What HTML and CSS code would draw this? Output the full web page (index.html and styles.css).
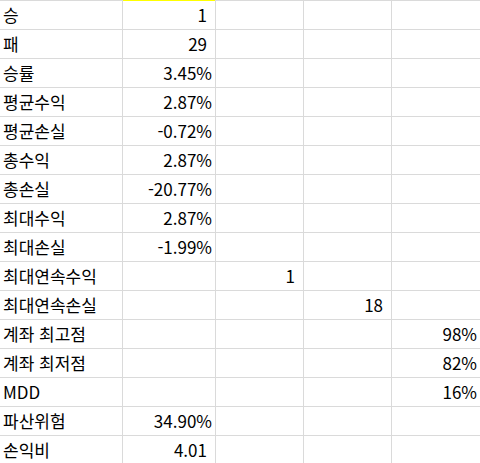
FILE: index.html
```html
<!DOCTYPE html>
<html lang="ko">
<head>
<meta charset="utf-8">
<link rel="stylesheet" href="styles.css">
</head>
<body>
<div class="sheet">
  <div class="c lbl">승</div><div class="c num n-int sel">1</div><div class="c"></div><div class="c"></div><div class="c"></div>
  <div class="c lbl">패</div><div class="c num n-int">29</div><div class="c"></div><div class="c"></div><div class="c"></div>
  <div class="c lbl">승률</div><div class="c num">3.45%</div><div class="c"></div><div class="c"></div><div class="c"></div>
  <div class="c lbl">평균수익</div><div class="c num">2.87%</div><div class="c"></div><div class="c"></div><div class="c"></div>
  <div class="c lbl">평균손실</div><div class="c num">-0.72%</div><div class="c"></div><div class="c"></div><div class="c"></div>
  <div class="c lbl">총수익</div><div class="c num">2.87%</div><div class="c"></div><div class="c"></div><div class="c"></div>
  <div class="c lbl">총손실</div><div class="c num">-20.77%</div><div class="c"></div><div class="c"></div><div class="c"></div>
  <div class="c lbl">최대수익</div><div class="c num">2.87%</div><div class="c"></div><div class="c"></div><div class="c"></div>
  <div class="c lbl">최대손실</div><div class="c num">-1.99%</div><div class="c"></div><div class="c"></div><div class="c"></div>
  <div class="c lbl">최대연속수익</div><div class="c"></div><div class="c num n-int">1</div><div class="c"></div><div class="c"></div>
  <div class="c lbl">최대연속손실</div><div class="c"></div><div class="c"></div><div class="c num n-int">18</div><div class="c"></div>
  <div class="c lbl">계좌 최고점</div><div class="c"></div><div class="c"></div><div class="c"></div><div class="c num">98%</div>
  <div class="c lbl">계좌 최저점</div><div class="c"></div><div class="c"></div><div class="c"></div><div class="c num">82%</div>
  <div class="c lbl">MDD</div><div class="c"></div><div class="c"></div><div class="c"></div><div class="c num">16%</div>
  <div class="c lbl">파산위험</div><div class="c num">34.90%</div><div class="c"></div><div class="c"></div><div class="c"></div>
  <div class="c lbl">손익비</div><div class="c num n-int">4.01</div><div class="c"></div><div class="c"></div><div class="c"></div>
</div>
</body>
</html>
```
FILE: styles.css
```css
html, body {
  margin: 0;
  padding: 0;
  background: #ffffff;
  overflow: hidden;
}

.sheet {
  display: grid;
  grid-template-columns: 122px 92px 87px 87px 88px;
  grid-auto-rows: 28px;
  gap: 1px;
  padding-top: 1px;
  width: 480px;
  background: #dadada;
  font-family: "Noto Sans CJK KR", "Noto Sans", sans-serif;
  font-size: 17px;
  color: #000000;
}

.c {
  background: #ffffff;
  line-height: 28px;
  white-space: nowrap;
  overflow: visible;
}

.lbl {
  padding-left: 3px;
}

.num {
  text-align: right;
  padding-right: 3px;
  font-variant-numeric: tabular-nums;
}

.n-int {
  padding-right: 8px;
}

.sel {
  box-shadow: 0 -1px 0 #ffff00;
}
```
